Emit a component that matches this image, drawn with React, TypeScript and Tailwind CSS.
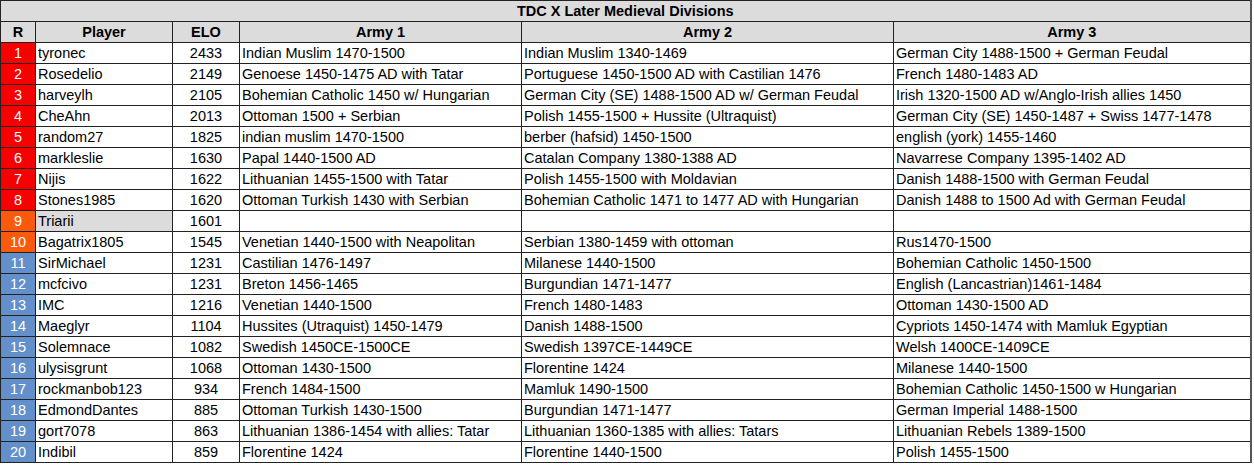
import React from "react";

type Row = [string, string, string, string, string, string];

const rows: Row[] = [
  ["1", "tyronec", "2433", "Indian Muslim 1470-1500", "Indian Muslim 1340-1469", "German City 1488-1500 + German Feudal"],
  ["2", "Rosedelio", "2149", "Genoese 1450-1475 AD with Tatar", "Portuguese 1450-1500 AD with Castilian 1476", "French 1480-1483 AD"],
  ["3", "harveylh", "2105", "Bohemian Catholic 1450 w/ Hungarian", "German City (SE) 1488-1500 AD w/ German Feudal", "Irish 1320-1500 AD w/Anglo-Irish allies 1450"],
  ["4", "CheAhn", "2013", "Ottoman 1500 + Serbian", "Polish 1455-1500 + Hussite (Ultraquist)", "German City (SE) 1450-1487 + Swiss 1477-1478"],
  ["5", "random27", "1825", "indian muslim 1470-1500", "berber (hafsid) 1450-1500", "english (york) 1455-1460"],
  ["6", "markleslie", "1630", "Papal 1440-1500 AD", "Catalan Company 1380-1388 AD", "Navarrese Company 1395-1402 AD"],
  ["7", "Nijis", "1622", "Lithuanian 1455-1500 with Tatar", "Polish 1455-1500 with Moldavian", "Danish 1488-1500 with German Feudal"],
  ["8", "Stones1985", "1620", "Ottoman Turkish 1430 with Serbian", "Bohemian Catholic 1471 to 1477 AD with Hungarian", "Danish 1488 to 1500 Ad with German Feudal"],
  ["9", "Triarii", "1601", "", "", ""],
  ["10", "Bagatrix1805", "1545", "Venetian 1440-1500 with Neapolitan", "Serbian 1380-1459 with ottoman", "Rus1470-1500"],
  ["11", "SirMichael", "1231", "Castilian 1476-1497", "Milanese 1440-1500", "Bohemian Catholic 1450-1500"],
  ["12", "mcfcivo", "1231", "Breton 1456-1465", "Burgundian 1471-1477", "English (Lancastrian)1461-1484"],
  ["13", "IMC", "1216", "Venetian 1440-1500", "French 1480-1483", "Ottoman 1430-1500 AD"],
  ["14", "Maeglyr", "1104", "Hussites (Utraquist) 1450-1479", "Danish 1488-1500", "Cypriots 1450-1474 with Mamluk Egyptian"],
  ["15", "Solemnace", "1082", "Swedish 1450CE-1500CE", "Swedish 1397CE-1449CE", "Welsh 1400CE-1409CE"],
  ["16", "ulysisgrunt", "1068", "Ottoman 1430-1500", "Florentine 1424", "Milanese 1440-1500"],
  ["17", "rockmanbob123", "934", "French 1484-1500", "Mamluk 1490-1500", "Bohemian Catholic 1450-1500 w Hungarian"],
  ["18", "EdmondDantes", "885", "Ottoman Turkish 1430-1500", "Burgundian 1471-1477", "German Imperial 1488-1500"],
  ["19", "gort7078", "863", "Lithuanian 1386-1454 with allies: Tatar", "Lithuanian 1360-1385 with allies: Tatars", "Lithuanian Rebels 1389-1500"],
  ["20", "Indibil", "859", "Florentine 1424", "Florentine 1440-1500", "Polish 1455-1500"],
];

function rankBg(i: number) {
  if (i < 8) return "bg-[#f60000]";
  if (i < 10) return "bg-[#fb5a0c]";
  return "bg-[#6390cb]";
}

export default function App() {
  return (
    <div className="w-[1254px] h-[469px] bg-white overflow-hidden" style={{ fontFamily: '"Liberation Sans", Arial, sans-serif' }}>
      <table className="table-fixed border-collapse w-[1250px] text-[14.5px] leading-none text-black">
        <colgroup>
          <col className="w-[35px]" />
          <col className="w-[137px]" />
          <col className="w-[67px]" />
          <col className="w-[282px]" />
          <col className="w-[372px]" />
          <col className="w-[357px]" />
        </colgroup>
        <tbody>
          <tr className="h-[21px]">
            <td colSpan={6} className="border border-[#222] border-r-2 border-r-[#555] bg-[#dcdcdc] text-center font-bold">
              TDC X Later Medieval Divisions
            </td>
          </tr>
          <tr className="h-[21px] bg-[#dcdcdc] font-bold">
            <td className="border border-[#222] text-center">R</td>
            <td className="border border-[#222] text-center">Player</td>
            <td className="border border-[#222] text-center">ELO</td>
            <td className="border border-[#222] text-center">Army 1</td>
            <td className="border border-[#222] text-center">Army 2</td>
            <td className="border border-[#222] border-r-2 border-r-[#555] text-center">Army 3</td>
          </tr>
          {rows.map((r, i) => (
            <tr key={r[0]} className="h-[21px]">
              <td className={`border border-[#222] text-center text-white ${rankBg(i)}`}>{r[0]}</td>
              <td className={`border border-[#222] pl-[2px] whitespace-nowrap ${i === 8 ? "bg-[#dcdcdc]" : ""}`}>{r[1]}</td>
              <td className="border border-[#222] text-center">{r[2]}</td>
              <td className="border border-[#222] pl-[2px] whitespace-nowrap overflow-hidden">{r[3]}</td>
              <td className="border border-[#222] pl-[2px] whitespace-nowrap overflow-hidden">{r[4]}</td>
              <td className="border border-[#222] border-r-2 border-r-[#555] pl-[2px] whitespace-nowrap overflow-hidden">{r[5]}</td>
            </tr>
          ))}
        </tbody>
      </table>
    </div>
  );
}
